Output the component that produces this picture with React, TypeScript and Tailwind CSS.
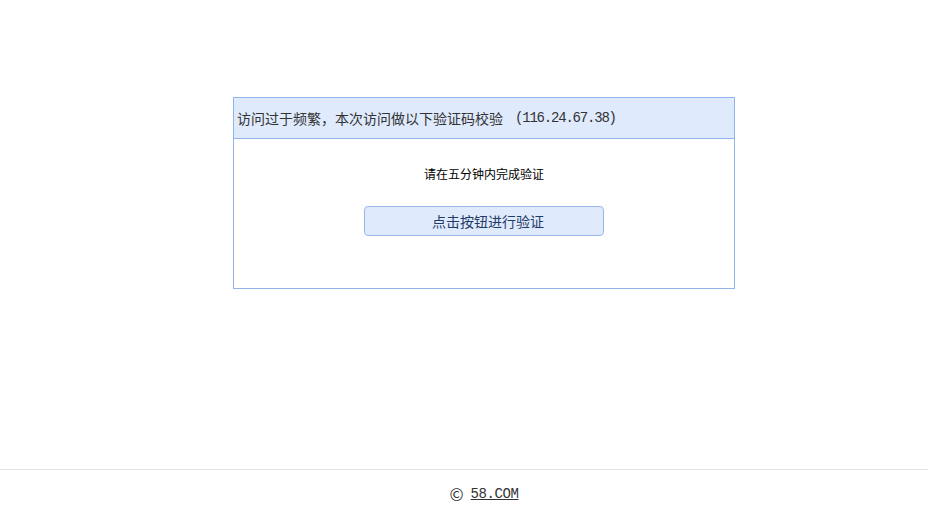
export default function App() {
  return (
    <div className="min-h-[518px] bg-white pl-[40px] font-['Noto_Sans_CJK_SC','Noto_Sans',sans-serif] text-[#333]">
      <div className="pt-[97px]">
        {/* Verify box */}
        <div className="mx-auto w-[502px] border border-[#8fb5e9]">
          <div className="flex h-[41px] items-center border-b border-[#8fb5e9] bg-[#dfeafd] px-[3px] text-[14px] text-[#333]">
            访问过于频繁，本次访问做以下验证码校验
            <span className="ml-[12px] font-['Liberation_Mono',monospace] tracking-[-1.2px]">(116.24.67.38)</span>
          </div>
          <div className="flex h-[149px] flex-col items-center pt-[27px]">
            <p className="text-[12px] leading-[16px] text-black">请在五分钟内完成验证</p>
            <button className="mt-[24px] h-[30px] w-[240px] rounded-[4px] border border-[#9bb9e7] bg-[#dfeafd] pl-[8px] pt-[1px] text-[14px] text-[#1f3a66]">
              点击按钮进行验证
            </button>
          </div>
        </div>
      </div>

      {/* Footer */}
      <div className="-ml-[40px] mt-[180px] border-t border-[#e3e3e3]">
        <div className="flex items-center justify-center pl-[40px] pt-[14px] text-[14px] leading-[20px] text-[#333]">
          <span className="mr-[7px] text-[17px] leading-[20px]">©</span>
          <span className="font-['Liberation_Mono',monospace] tracking-[-0.4px] underline">58.COM</span>
        </div>
      </div>
    </div>
  )
}
